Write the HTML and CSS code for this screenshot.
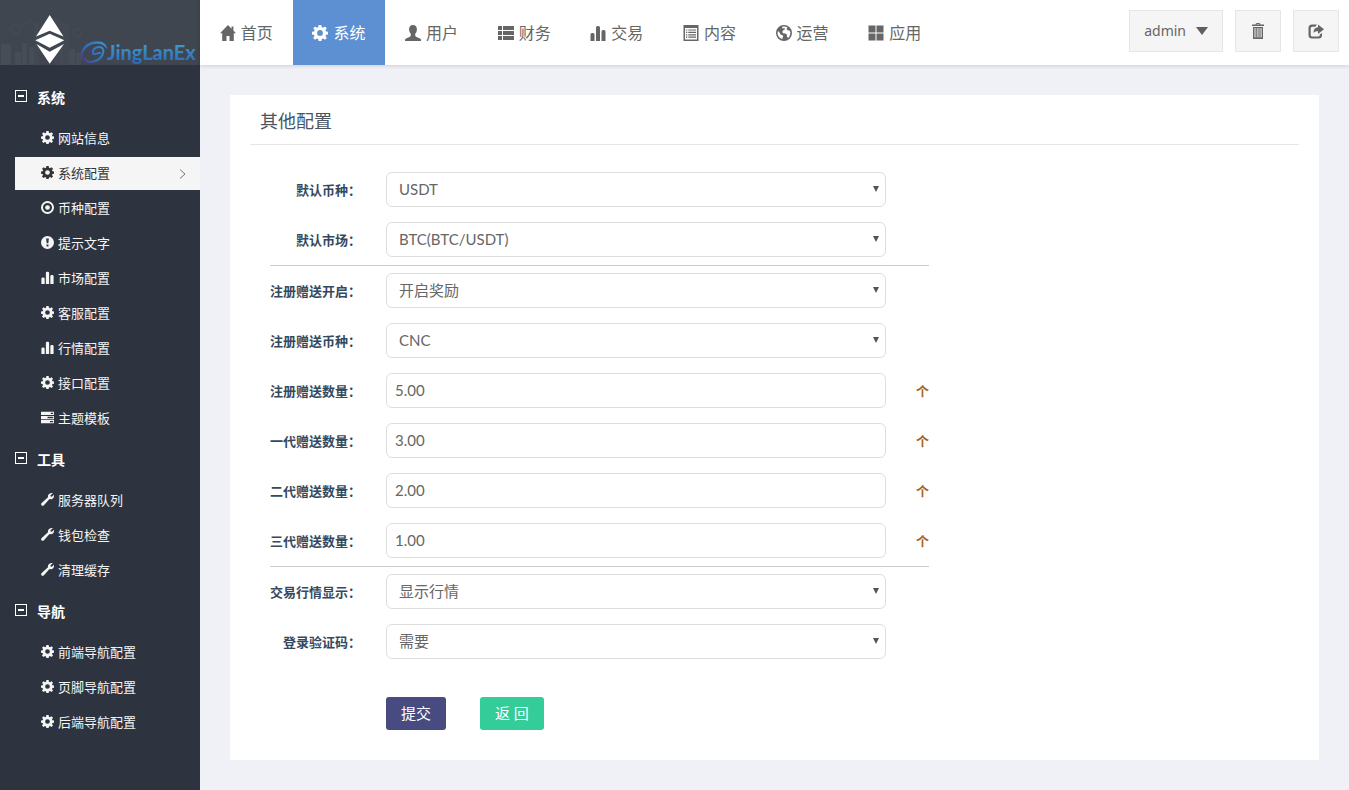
FILE: index.html
```html
<!DOCTYPE html>
<html lang="zh-CN">
<head>
<meta charset="utf-8">
<title>其他配置</title>
<meta name="viewport" content="width=device-width, initial-scale=1">
<link rel="stylesheet" href="styles.css">
</head>
<body>
<svg class="sprite" aria-hidden="true">
  <symbol id="i-home" viewBox="0 0 16 16"><path d="M8 0 0 8.3h2.200V16h4.300v-5h3v5h4.300V8.300H16l-2.600-2.700V1.600h-1.800v2.100z"/></symbol>
  <symbol id="i-cog" viewBox="0 0 16 16"><path fill-rule="evenodd" d="M6.600 0h2.800l.4 2.200 1.300.5 1.800-1.300 1.900 1.900-1.300 1.800.6 1.400 2.100.3v2.600l-2.100.4-.6 1.300 1.300 1.800-1.900 1.900-1.800-1.300-1.300.6-.4 2.100H6.600l-.4-2.100-1.300-.6-1.800 1.300-1.900-1.900 1.300-1.800-.6-1.300L0 9.400V6.800l2.100-.3.5-1.400-1.300-1.800 1.900-1.900 1.800 1.300 1.200-.5zM8 5.100a2.900 2.900 0 1 0 0 5.800 2.900 2.900 0 0 0 0-5.800z"/></symbol>
  <symbol id="i-user" viewBox="0 0 16 16"><path d="M8 0c2.600 0 4 1.900 3.900 4.400 0 1.900-.8 3.500-1.700 4.400v1.500c0 .8.500 1.200 1.300 1.600l3 1.300c1 .5 1.500 1 1.500 1.700V16H0v-1.100c0-.7.5-1.200 1.500-1.700l3-1.300c.8-.4 1.300-.8 1.300-1.600V8.800C4.900 7.900 4.100 6.300 4.100 4.400 4 1.900 5.400 0 8 0z"/></symbol>
  <symbol id="i-list" viewBox="0 0 16 16"><path d="M0 1h4v4H0zM5 1h11v4H5zM0 6h4v4H0zM5 6h11v4H5zM0 11h4v4H0zM5 11h11v4H5z"/></symbol>
  <symbol id="i-stats" viewBox="0 0 16 16"><path d="M.5 16V9.500q0-1.500 1.500-1.500h1q1.500 0 1.500 1.500V16zM6 16V2.500Q6 1 7.500 1h1Q10 1 10 2.500V16zM11.500 16V6.500q0-1.500 1.500-1.500h1q1.500 0 1.500 1.500V16z"/></symbol>
  <symbol id="i-doc" viewBox="0 0 16 16"><path fill-rule="evenodd" d="M.5 0h15v16H.5zM2 3v11.600h12V3z"/><path d="M3 4.400h1.300v1.200H3zM5.300 4.400H13v1.200H5.300zM3 6.800h1.300V8H3zM5.300 6.800H13V8H5.300zM3 9.200h1.300v1.200H3zM5.300 9.200H13v1.200H5.300zM3 11.600h1.300v1.200H3zM5.300 11.600H13v1.200H5.300z"/></symbol>
  <symbol id="i-globe" viewBox="0 0 16 16"><path fill-rule="evenodd" d="M8 0a8 8 0 1 0 0 16A8 8 0 0 0 8 0zM8 1.500c1.300 0 2.600.4 3.600 1.100L10.500 4l1 1.200 2 .2 1 2.200-.8 3.400-1.600 2.100-1.200-1.500V9.500L9.300 8.600 6.900 8.200l-.5-1.600 1.400-1.900 1.400-.5-1-1.200-1.300.6L6 3l.7-1.400zM2 6l1.500 1.500 1 2 2.100.8.700 1.200-.9 1.200.2 1.500C3.600 13.400 1.500 11 1.500 8z"/></symbol>
  <symbol id="i-grid" viewBox="0 0 16 16"><path d="M.5.5h7v7h-7zM8.500.5h7v7h-7zM.5 8.500h7v7h-7zM8.500 8.500h7v7h-7z"/></symbol>
  <symbol id="i-record" viewBox="0 0 16 16"><path fill-rule="evenodd" d="M8 0a8 8 0 1 0 0 16A8 8 0 0 0 8 0zm0 2.400a5.600 5.600 0 1 1 0 11.200A5.600 5.600 0 0 1 8 2.400z"/><circle cx="8" cy="8" r="2.900"/></symbol>
  <symbol id="i-alert" viewBox="0 0 16 16"><path fill-rule="evenodd" d="M8 0a8 8 0 1 0 0 16A8 8 0 0 0 8 0zM6.300 3h3.400L9 9H7zM6.800 10.400h2.400v2.400H6.800z"/></symbol>
  <symbol id="i-tasks" viewBox="0 0 16 16"><path fill-rule="evenodd" d="M0 1h16v4H0zM12 2.200v1.600h3V2.200zM0 6h16v4H0zM8 7.200v1.600h7V7.200zM0 11h16v4H0zM11 12.200v1.600h4v-1.600z"/></symbol>
  <symbol id="i-wrench" viewBox="0 0 16 16"><path d="M14.500.3 11.600 2.800l.3 1.500 1.500.3L16 2.300c.3 2.300-.6 4.200-2.400 5-1.200.5-2.200.5-3.100.2L3.600 15c-.9 1-2.100 1-2.900.3-.8-.8-.8-2 .2-2.900l7.700-7.200C8.300 3.500 8.900 1.800 10.500.8c1.200-.8 2.700-1 4-.5z"/></symbol>
  <symbol id="i-trash" viewBox="0 0 16 16"><path fill-rule="evenodd" d="M5.500 1.500Q5.500 0 7 0h2q1.500 0 1.500 1.500H14V3H2V1.500zm1.200 0h2.600V1H6.700zM3 4h10v12H3zm1.500 1v9.500h1V5zm2.300 0v9.500h.8V5zm1.800 0v9.500h.8V5zm2 0v9.500h1V5z"/></symbol>
  <symbol id="i-share" viewBox="0 0 16 16"><path d="M9 1.500H4Q.5 1.500.5 5v7Q.5 15.500 4 15.500h6.500q3.500 0 3.500-3.500v-2l-2.200 1.600v.4q0 1.500-1.500 1.500H4.200q-1.500 0-1.500-1.500V5.200q0-1.500 1.500-1.500h3z"/><path d="M10 1.500 16 6.300 10 11V8.300C7.700 8.200 6.500 8.800 5.500 10 5.500 6.500 7 4.500 10 4.300z"/></symbol>
</svg>

<div class="app">
  <aside class="sidebar">
    <a class="brand" href="#" aria-label="JingLanEx">
      <svg class="brand-art" viewBox="0 0 200 65">
        <defs>
          <linearGradient id="blue" x1="0" y1="0" x2="0" y2="1"><stop offset="0" stop-color="#46a3d6"/><stop offset="1" stop-color="#2a68b5"/></linearGradient>
          <linearGradient id="swirl" gradientUnits="userSpaceOnUse" x1="80" y1="62" x2="107" y2="42"><stop offset="0" stop-color="#5a2f8e"/><stop offset=".4" stop-color="#2f6bb8"/><stop offset="1" stop-color="#3797d2"/></linearGradient>
        </defs>
        <g fill="#464d56">
          <path d="M1 65V44h10v21zM15 65V52h6v13zM22 65V43h5v22zM29 65V47h5v18zM59 65V44h7v21zM67 65V49h8v16zM76 65V53h5v12z"/>
          <path fill="#424952" d="M34 65V22h5v43zM55 65V18h6v47zM62 65V23h7v42z"/>
        </g>
        <g fill="none" stroke="#464d56"><circle cx="16" cy="29" r="5"/><circle cx="77" cy="33" r="4"/><path d="M21 26 31 20M73 31l-8-6"/></g>
        <path fill="#fff" d="M49.700 15 63.500 36.500 49.700 30.700 36 36.500zM49.700 33.700 64.300 40.300 49.700 47.700 35.300 40.300zM36.500 44l13.200 7.700L64 44 49.700 63.700z"/>
        <path fill="url(#swirl)" d="M84 63C78 58 80 45 92 42c9-2.500 15 1 15 7-3-5-9-6.500-15-4.500-8 3-12 11-8 18.500z"/>
        <path fill="none" stroke="url(#swirl)" stroke-width="2" stroke-linecap="round" d="M93 54c-1-4 2-7 6-7 4 0 5 3 4 6-1 5-7 9-12 9-3 0-5-1-6-3M94 54l6-1"/>
        <circle cx="90" cy="51" r="1.500" fill="#5c3594"/>
        <text class="brand-name" x="107" y="60" fill="url(#blue)">JingLanEx</text>
      </svg>
    </a>
    <nav class="menu">
      <h3 class="menu-head"><i class="minus"></i>系统</h3>
      <ul class="menu-list">
        <li><a href="#"><svg class="ico-s"><use href="#i-cog"/></svg>网站信息</a></li>
        <li><a class="current" href="#"><svg class="ico-s"><use href="#i-cog"/></svg>系统配置<svg class="chevron" viewBox="0 0 7 10"><path d="m1 .5 5 4.500-5 4.500"/></svg></a></li>
        <li><a href="#"><svg class="ico-s"><use href="#i-record"/></svg>币种配置</a></li>
        <li><a href="#"><svg class="ico-s"><use href="#i-alert"/></svg>提示文字</a></li>
        <li><a href="#"><svg class="ico-s"><use href="#i-stats"/></svg>市场配置</a></li>
        <li><a href="#"><svg class="ico-s"><use href="#i-cog"/></svg>客服配置</a></li>
        <li><a href="#"><svg class="ico-s"><use href="#i-stats"/></svg>行情配置</a></li>
        <li><a href="#"><svg class="ico-s"><use href="#i-cog"/></svg>接口配置</a></li>
        <li><a href="#"><svg class="ico-s"><use href="#i-tasks"/></svg>主题模板</a></li>
      </ul>
      <h3 class="menu-head"><i class="minus"></i>工具</h3>
      <ul class="menu-list">
        <li><a href="#"><svg class="ico-s"><use href="#i-wrench"/></svg>服务器队列</a></li>
        <li><a href="#"><svg class="ico-s"><use href="#i-wrench"/></svg>钱包检查</a></li>
        <li><a href="#"><svg class="ico-s"><use href="#i-wrench"/></svg>清理缓存</a></li>
      </ul>
      <h3 class="menu-head"><i class="minus"></i>导航</h3>
      <ul class="menu-list">
        <li><a href="#"><svg class="ico-s"><use href="#i-cog"/></svg>前端导航配置</a></li>
        <li><a href="#"><svg class="ico-s"><use href="#i-cog"/></svg>页脚导航配置</a></li>
        <li><a href="#"><svg class="ico-s"><use href="#i-cog"/></svg>后端导航配置</a></li>
      </ul>
    </nav>
  </aside>

  <div class="main">
    <header class="topbar">
      <nav class="tabs">
        <a href="#"><svg class="ico"><use href="#i-home"/></svg>首页</a>
        <a class="current" href="#"><svg class="ico"><use href="#i-cog"/></svg>系统</a>
        <a href="#"><svg class="ico"><use href="#i-user"/></svg>用户</a>
        <a href="#"><svg class="ico"><use href="#i-list"/></svg>财务</a>
        <a href="#"><svg class="ico"><use href="#i-stats"/></svg>交易</a>
        <a href="#"><svg class="ico"><use href="#i-doc"/></svg>内容</a>
        <a href="#"><svg class="ico"><use href="#i-globe"/></svg>运营</a>
        <a href="#"><svg class="ico"><use href="#i-grid"/></svg>应用</a>
      </nav>
      <div class="tools">
        <button class="tool" type="button">admin<i class="caret"></i></button>
        <button class="tool" type="button" aria-label="清理缓存"><svg class="ico"><use href="#i-trash"/></svg></button>
        <button class="tool" type="button" aria-label="退出"><svg class="ico"><use href="#i-share"/></svg></button>
      </div>
    </header>

    <main class="panel">
      <h1 class="panel-title">其他配置</h1>
      <form class="form">
        <div class="rows">
          <div class="row"><label for="coin">默认币种：</label><span class="pick"><select id="coin"><option>USDT</option></select></span></div>
          <div class="row"><label for="market">默认市场：</label><span class="pick"><select id="market"><option>BTC(BTC/USDT)</option></select></span></div>
        </div>
        <div class="rows">
          <div class="row"><label for="gift">注册赠送开启：</label><span class="pick"><select id="gift"><option>开启奖励</option></select></span></div>
          <div class="row"><label for="giftcoin">注册赠送币种：</label><span class="pick"><select id="giftcoin"><option>CNC</option></select></span></div>
          <div class="row"><label for="n0">注册赠送数量：</label><input id="n0" type="text" value="5.00"><span class="unit">个</span></div>
          <div class="row"><label for="n1">一代赠送数量：</label><input id="n1" type="text" value="3.00"><span class="unit">个</span></div>
          <div class="row"><label for="n2">二代赠送数量：</label><input id="n2" type="text" value="2.00"><span class="unit">个</span></div>
          <div class="row"><label for="n3">三代赠送数量：</label><input id="n3" type="text" value="1.00"><span class="unit">个</span></div>
        </div>
        <div class="rows">
          <div class="row"><label for="show">交易行情显示：</label><span class="pick"><select id="show"><option>显示行情</option></select></span></div>
          <div class="row"><label for="code">登录验证码：</label><span class="pick"><select id="code"><option>需要</option></select></span></div>
        </div>
        <div class="actions">
          <button class="btn btn-submit" type="submit">提交</button>
          <a class="btn btn-back" href="#">返 回</a>
        </div>
      </form>
    </main>
  </div>
</div>
</body>
</html>
```

FILE: styles.css
```css
* { box-sizing: border-box; }

body {
  margin: 0;
  background: #f0f1f7;
  color: #666;
  font: 15px/20px Lato, "Noto Sans CJK SC", sans-serif;
}

a { color: inherit; text-decoration: none; }
button, input, select { font: inherit; color: inherit; }

.sprite { display: none; }
.ico { width: 16px; height: 16px; fill: currentColor; flex: none; }
.ico-s { width: 13px; height: 13px; fill: currentColor; flex: none; }

.app { display: flex; min-height: 100vh; }

/* sidebar */
.sidebar { width: 200px; flex: none; background: #2d333f; color: #f5f5f5; }
.brand { display: block; background: #3f464f; }
.brand-art { display: block; width: 100%; }
.brand-name { font: 700 20px Lato, sans-serif; }

.menu { padding-top: 10px; }
.menu-head {
  display: flex;
  align-items: center;
  gap: 10px;
  height: 47px;
  margin: 0;
  padding: 0 0 2px 15px;
  color: #fff;
  font-size: 14px;
  font-weight: 700;
}
.minus {
  width: 12px;
  height: 12px;
  margin-bottom: 4px;
  border: 1px solid #fff;
  background: linear-gradient(#fff, #fff) center / 6px 2px no-repeat;
}
.menu-list { margin: 0; padding: 0 0 0 15px; list-style: none; }
.menu-list li { padding-bottom: 2px; }
.menu-list a {
  display: flex;
  align-items: center;
  gap: 4px;
  height: 33px;
  padding: 0 14px 2px 26px;
  font-size: 13px;
}
.menu-list .current { background: #f5f5f5; color: #333; }
.chevron { width: 7px; height: 10px; margin: 2px 0 0 auto; fill: none; stroke: #777; }

/* top bar */
.main { flex: 1; min-width: 0; }
.topbar {
  display: flex;
  justify-content: space-between;
  height: 65px;
  background: #fff;
  box-shadow: 0 1px 4px rgba(0, 0, 0, .15);
}
.tabs {
  display: grid;
  grid-template-columns: repeat(8, 1fr);
  flex: 1;
  max-width: 741px;
  font-size: 16px;
}
.tabs a { display: flex; align-items: center; justify-content: center; gap: 5px; }
.tabs .current { background: #5c90d2; color: #fff; }

.tools { display: flex; gap: 12px; padding: 10px 10px 0 0; }
.tool {
  display: flex;
  align-items: center;
  gap: 10px;
  height: 42px;
  padding: 0 14px;
  border: 1px solid #e6e6e6;
  background: #f5f5f5;
  font-family: "Noto Sans", sans-serif;
  font-size: 14px;
}
.caret { border: 6px solid transparent; border-top: 8px solid #5f5f5f; border-bottom: 0; }

/* panel */
.panel { margin: 30px; padding: 0 20px 30px; background: #fff; }
.panel-title {
  margin: 0;
  padding: 3px 10px 0;
  border-bottom: 1px solid #e6e6e6;
  color: #4a5560;
  font-size: 18px;
  font-weight: 400;
  line-height: 46px;
}

.form { max-width: 699px; padding: 20px 20px 0; }
.rows { display: grid; gap: 15px; padding: 7px 0 8px; border-bottom: 1px solid #ccc; }
.rows:nth-of-type(3) { border: 0; }
.row { display: grid; grid-template-columns: 91px minmax(0, 1fr) 13px; align-items: center; }
.row label { color: #34495e; font-size: 13px; font-weight: 700; text-align: right; }
.pick, .row input { margin: 0 30px 0 25px; }
.pick { position: relative; }
.pick::after {
  content: "";
  position: absolute;
  top: 14px;
  right: 7px;
  border: 3px solid transparent;
  border-top: 6px solid #555;
  border-bottom: 0;
  pointer-events: none;
}
.row input, .pick select {
  display: block;
  height: 35px;
  padding: 0 8px 2px;
  border: 1px solid #dedede;
  border-radius: 6px;
  background: #fff;
}
.pick select { width: 100%; padding: 0 12px 2px; appearance: none; }
.unit { color: #a8641e; font-size: 13px; font-weight: 700; }

.actions { display: flex; gap: 34px; padding: 30px 0 0 116px; }
.btn { height: 33px; padding: 0 15px; border: 0; border-radius: 3px; color: #fff; line-height: 33px; }
.btn-submit { background: #484b80; }
.btn-back { background: #34cc98; }
```
